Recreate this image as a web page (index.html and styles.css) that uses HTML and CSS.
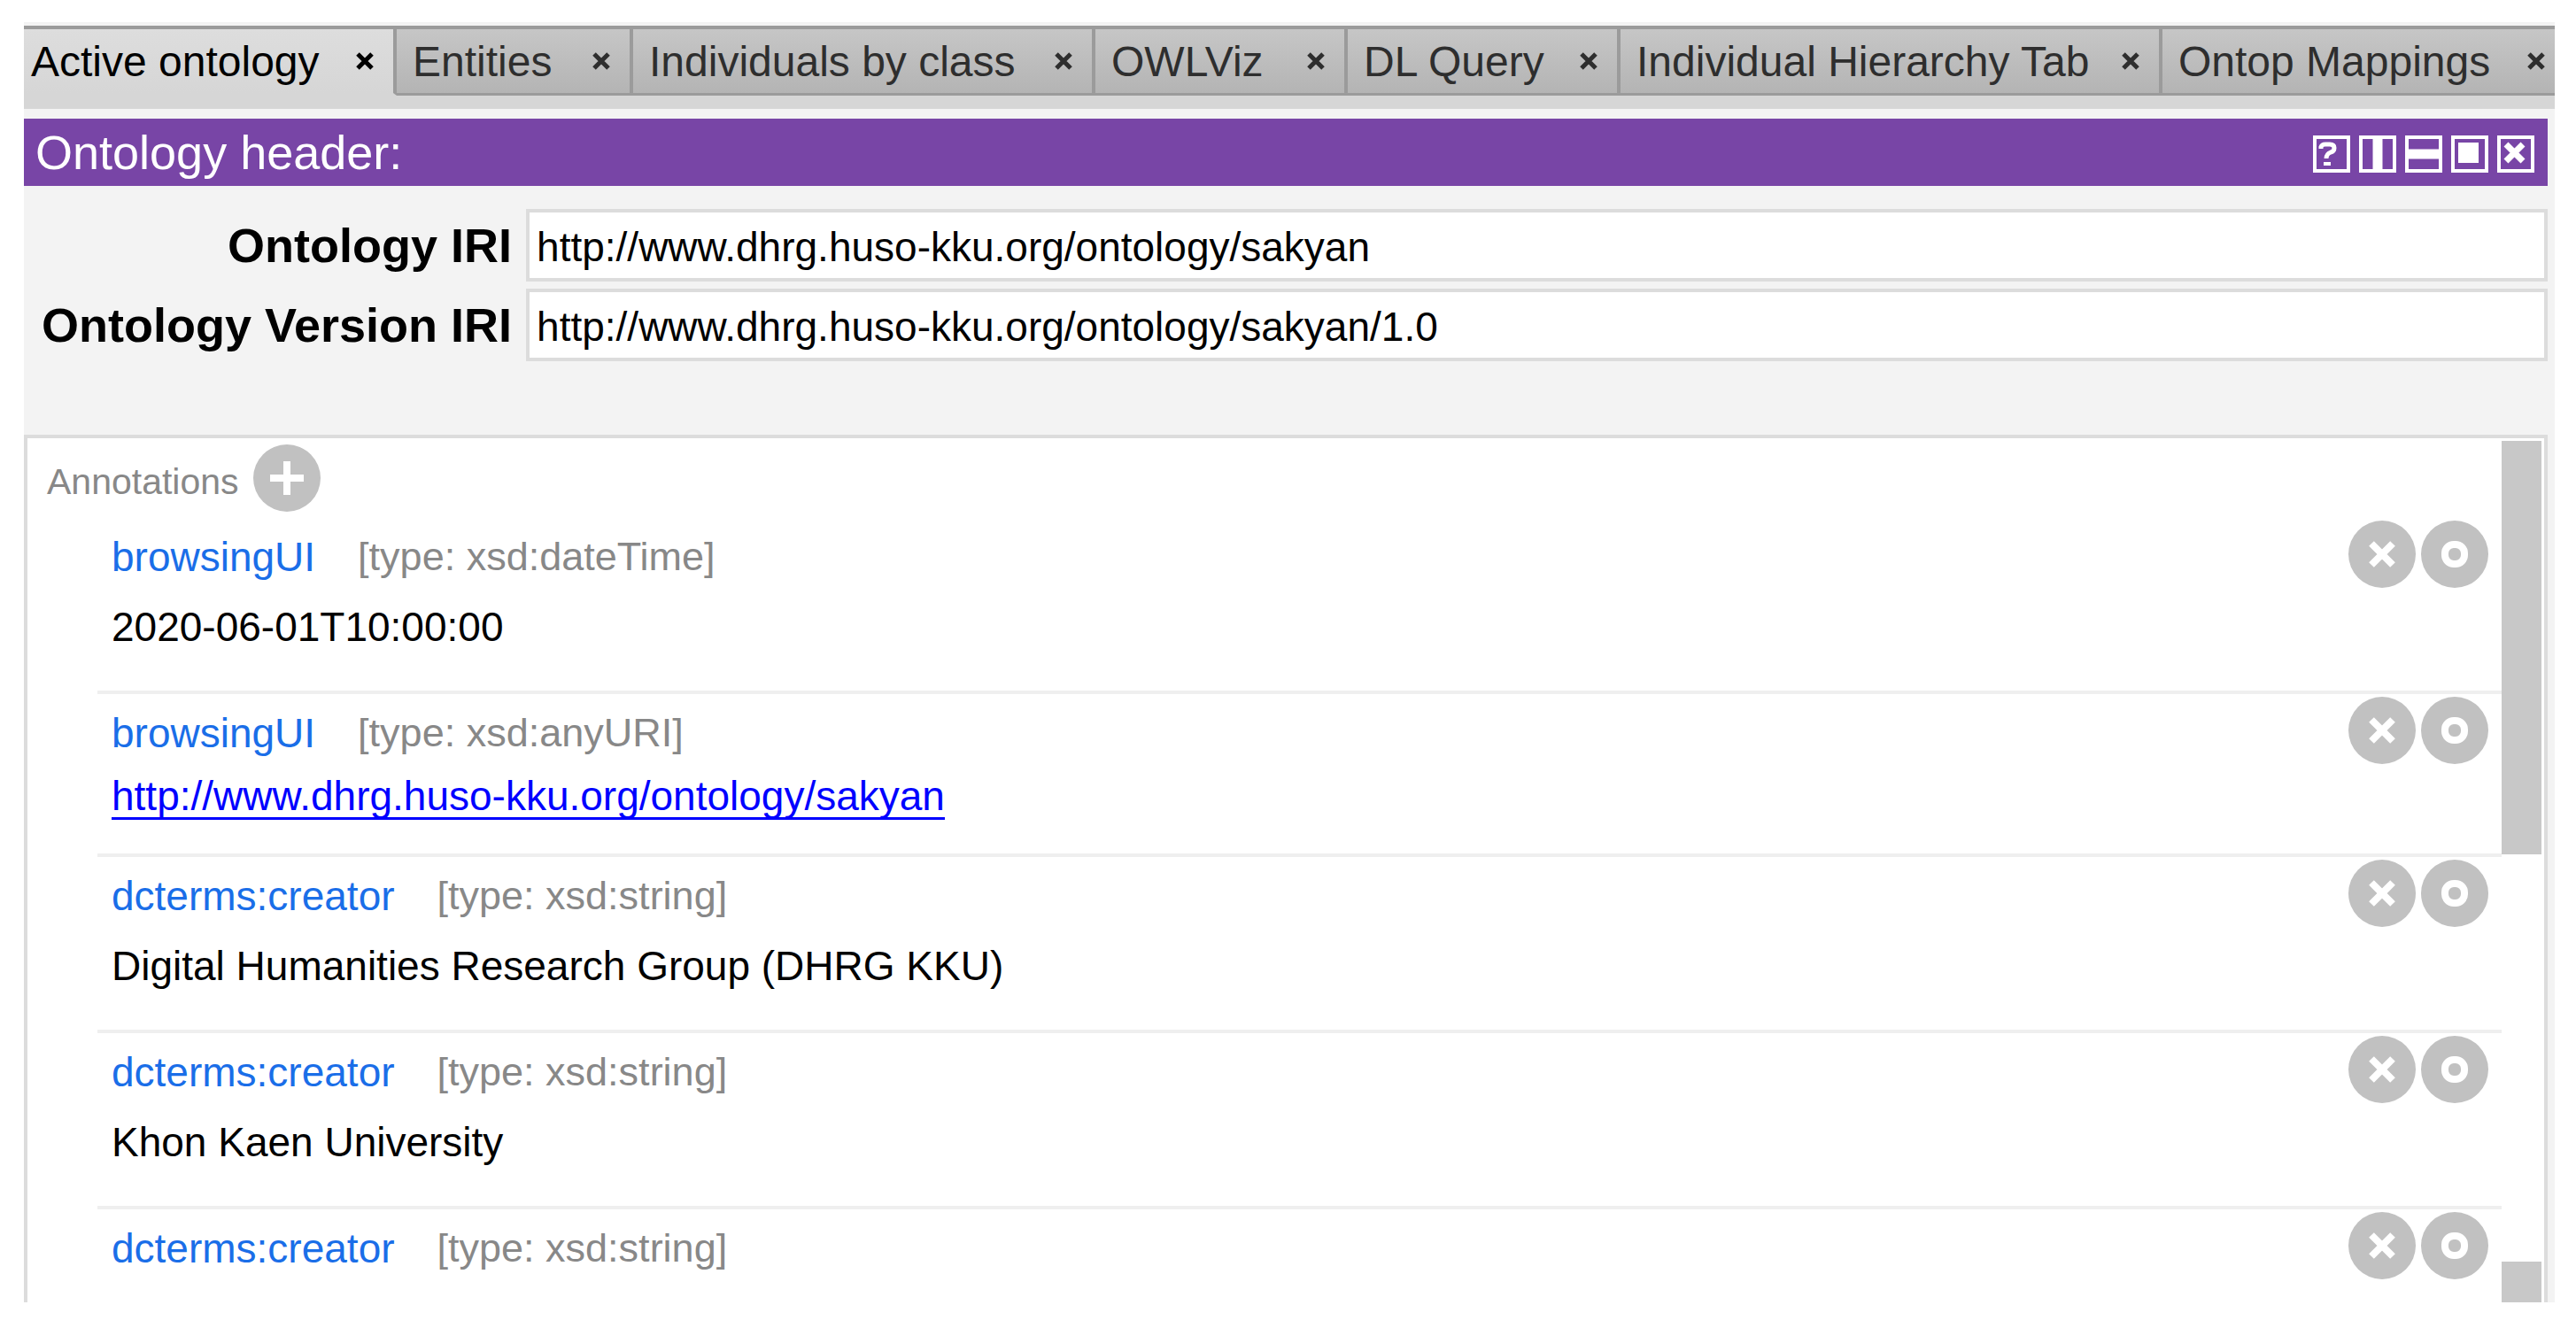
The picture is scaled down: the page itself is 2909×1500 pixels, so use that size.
FILE: index.html
```html
<!DOCTYPE html>
<html lang="en">
  <head>
    <meta charset="UTF-8" />
    <title>Active ontology</title>
    <link rel="stylesheet" href="styles.css">
  </head>
  <body>
    <!-- Shared icons -->
    <svg class="icon-defs" aria-hidden="true">
      <symbol id="icon-tab-close" viewBox="0 0 20 20">
        <path d="M2 2L18 18M18 2L2 18" stroke="currentColor" stroke-width="5" />
      </symbol>
      <symbol id="icon-delete" viewBox="0 0 76 76">
        <circle cx="38" cy="38" r="38" fill="#c1c1c1" />
        <path d="M26 26L50 50M50 26L26 50" stroke="#fff" stroke-width="8" />
      </symbol>
      <symbol id="icon-edit" viewBox="0 0 76 76">
        <circle cx="38" cy="38" r="38" fill="#c1c1c1" />
        <rect x="27" y="27" width="22" height="22" rx="10" fill="none" stroke="#fff" stroke-width="8" />
      </symbol>
    </svg>

    <div class="window">
      <nav class="tabs">
        <div class="tab active">
          <button class="tab-name">Active ontology</button>
          <button class="tab-close" aria-label="Close"><svg><use href="#icon-tab-close" /></svg></button>
        </div>
        <div class="tab">
          <button class="tab-name">Entities</button>
          <button class="tab-close" aria-label="Close"><svg><use href="#icon-tab-close" /></svg></button>
        </div>
        <div class="tab">
          <button class="tab-name">Individuals by class</button>
          <button class="tab-close" aria-label="Close"><svg><use href="#icon-tab-close" /></svg></button>
        </div>
        <div class="tab">
          <button class="tab-name">OWLViz</button>
          <button class="tab-close" aria-label="Close"><svg><use href="#icon-tab-close" /></svg></button>
        </div>
        <div class="tab">
          <button class="tab-name">DL Query</button>
          <button class="tab-close" aria-label="Close"><svg><use href="#icon-tab-close" /></svg></button>
        </div>
        <div class="tab">
          <button class="tab-name">Individual Hierarchy Tab</button>
          <button class="tab-close" aria-label="Close"><svg><use href="#icon-tab-close" /></svg></button>
        </div>
        <div class="tab">
          <button class="tab-name">Ontop Mappings</button>
          <button class="tab-close" aria-label="Close"><svg><use href="#icon-tab-close" /></svg></button>
        </div>
      </nav>

      <main class="view">
        <header class="view-header">
          <h1>Ontology header:</h1>
          <div class="view-actions">
            <button aria-label="Help">
              <svg viewBox="0 0 42 42" fill="none" stroke="#fff">
                <rect x="2" y="2" width="38" height="38" stroke-width="4" />
                <path d="M9 15V13Q10 10 14 10H19Q24 10 24 14Q24 18 20 19Q15 21 15 26" stroke-width="5" />
                <path d="M12 32H20" stroke-width="4" />
              </svg>
            </button>
            <button aria-label="Split vertically">
              <svg viewBox="0 0 42 42" fill="none" stroke="#fff">
                <rect x="2" y="2" width="38" height="38" stroke-width="4" />
                <path d="M21 2V40" stroke-width="11" />
              </svg>
            </button>
            <button aria-label="Split horizontally">
              <svg viewBox="0 0 42 42" fill="none" stroke="#fff">
                <rect x="2" y="2" width="38" height="38" stroke-width="4" />
                <path d="M2 21H40" stroke-width="11" />
              </svg>
            </button>
            <button aria-label="Float">
              <svg viewBox="0 0 42 42" fill="none" stroke="#fff">
                <rect x="2" y="2" width="38" height="38" stroke-width="4" />
                <rect x="8" y="8" width="23" height="23" fill="#fff" stroke="none" />
              </svg>
            </button>
            <button aria-label="Close view">
              <svg viewBox="0 0 42 42" fill="none" stroke="#fff">
                <rect x="2" y="2" width="38" height="38" stroke-width="4" />
                <path d="M10 10L29 29M29 10L10 29" stroke-width="7" />
              </svg>
            </button>
          </div>
        </header>

        <form class="iri-form">
          <label for="ontology-iri">Ontology IRI</label>
          <input type="text" id="ontology-iri" value="http://www.dhrg.huso-kku.org/ontology/sakyan" />
          <label for="version-iri">Ontology Version IRI</label>
          <input type="text" id="version-iri" value="http://www.dhrg.huso-kku.org/ontology/sakyan/1.0" />
        </form>

        <section class="annotations">
          <div class="annotations-list">
            <div class="annotations-title">
              <h2>Annotations</h2>
              <button class="round-button" aria-label="Add annotation">
                <svg viewBox="0 0 76 76">
                  <circle cx="38" cy="38" r="38" fill="#c1c1c1" />
                  <path d="M38 19V57M19 38H57" stroke="#fff" stroke-width="8" />
                </svg>
              </button>
            </div>

            <article class="annotation">
              <div class="annotation-head">
                <span class="property">browsingUI</span>
                <span class="type">[type: xsd:dateTime]</span>
                <button class="round-button" aria-label="Delete"><svg><use href="#icon-delete" /></svg></button>
                <button class="round-button" aria-label="Edit"><svg><use href="#icon-edit" /></svg></button>
              </div>
              <p class="value">2020-06-01T10:00:00</p>
            </article>

            <article class="annotation">
              <div class="annotation-head">
                <span class="property">browsingUI</span>
                <span class="type">[type: xsd:anyURI]</span>
                <button class="round-button" aria-label="Delete"><svg><use href="#icon-delete" /></svg></button>
                <button class="round-button" aria-label="Edit"><svg><use href="#icon-edit" /></svg></button>
              </div>
              <p class="value link"><a href="#">http://www.dhrg.huso-kku.org/ontology/sakyan</a></p>
            </article>

            <article class="annotation">
              <div class="annotation-head">
                <span class="property">dcterms:creator</span>
                <span class="type">[type: xsd:string]</span>
                <button class="round-button" aria-label="Delete"><svg><use href="#icon-delete" /></svg></button>
                <button class="round-button" aria-label="Edit"><svg><use href="#icon-edit" /></svg></button>
              </div>
              <p class="value">Digital Humanities Research Group (DHRG KKU)</p>
            </article>

            <article class="annotation">
              <div class="annotation-head">
                <span class="property">dcterms:creator</span>
                <span class="type">[type: xsd:string]</span>
                <button class="round-button" aria-label="Delete"><svg><use href="#icon-delete" /></svg></button>
                <button class="round-button" aria-label="Edit"><svg><use href="#icon-edit" /></svg></button>
              </div>
              <p class="value">Khon Kaen University</p>
            </article>

            <article class="annotation">
              <div class="annotation-head">
                <span class="property">dcterms:creator</span>
                <span class="type">[type: xsd:string]</span>
                <button class="round-button" aria-label="Delete"><svg><use href="#icon-delete" /></svg></button>
                <button class="round-button" aria-label="Edit"><svg><use href="#icon-edit" /></svg></button>
              </div>
            </article>
          </div>

          <div class="scrollbar">
            <div class="scroll-thumb"></div>
            <div class="scroll-end"></div>
          </div>
        </section>
      </main>
    </div>
  </body>
</html>
```
FILE: styles.css
```css
/* General Styles */
* {
  box-sizing: border-box;
}

body {
  margin: 0;
  padding: 25px 24px 29px 27px;
  height: 100vh;
  background: #fff;
  color: #000;
  font-family: "Liberation Sans", Arial, sans-serif;
}

h1,
h2,
p {
  margin: 0;
  font-weight: normal;
}

button {
  padding: 0;
  border: none;
  background: none;
  color: inherit;
  font: inherit;
  cursor: pointer;
}

svg {
  display: block;
  width: 100%;
  height: 100%;
}

.icon-defs {
  position: absolute;
  width: 0;
  height: 0;
}

.window {
  display: flex;
  flex-direction: column;
  height: 100%;
  padding-top: 4px;
  background: #f3f3f3;
}

/* Tabs */
.tabs {
  display: grid;
  grid-template-columns: 421fr 267fr 522fr 285fr 308fr 612fr 443fr;
  padding-bottom: 15px;
  border-top: 4px solid #9b9b9b;
  background: #d6d6d6;
}

.tab {
  display: flex;
  align-items: center;
  justify-content: space-between;
  min-width: 0;
  height: 75px;
  padding: 0 22px 0 18px;
  border-right: 4px solid #9b9b9b;
  border-bottom: 3px solid #9b9b9b;
  background: linear-gradient(#c6c6c6, #b4b4b4);
  color: #2e2e2e;
  font-size: 48px;
  white-space: nowrap;
}

.tab.active {
  padding-left: 8px;
  border-bottom-color: #d6d6d6;
  background: linear-gradient(#dddddd, #d6d6d6);
  color: #000;
}

.tab:last-child {
  padding-right: 11px;
  border-right: none;
}

.tab-close {
  flex: none;
  width: 20px;
  height: 20px;
}

/* View */
.view {
  display: flex;
  flex-direction: column;
  flex: 1;
  min-height: 0;
  padding: 11px 8px 0 0;
}

.view-header {
  display: flex;
  align-items: center;
  justify-content: space-between;
  height: 76px;
  padding: 0 15px 0 13px;
  background: #7845a6;
  color: #fff;
}

.view-header h1 {
  font-size: 54px;
}

.view-actions {
  display: flex;
  gap: 10px;
  padding-top: 4px;
}

.view-actions button {
  width: 42px;
  height: 42px;
}

.iri-form {
  display: grid;
  grid-template-columns: auto 1fr;
  align-items: center;
  gap: 8px 16px;
  padding: 26px 0 83px 20px;
}

.iri-form label {
  font-size: 54px;
  font-weight: bold;
  text-align: right;
}

.iri-form input {
  width: 100%;
  height: 82px;
  padding: 4px 8px 0;
  border: 4px solid #dcdcdc;
  background: #fff;
  color: #000;
  font-family: inherit;
  font-size: 46px;
}

/* Annotations */
.annotations {
  display: flex;
  flex: 1;
  min-height: 0;
  overflow: hidden;
  border: 4px solid #dcdcdc;
  border-bottom: none;
  background: #fff;
}

.annotations-list {
  flex: 1;
}

.annotations-title {
  display: flex;
  align-items: center;
  gap: 16px;
  padding: 7px 0 7px 22px;
}

.annotations-title h2 {
  padding-top: 8px;
  color: #888;
  font-size: 41px;
}

.round-button {
  flex: none;
  width: 76px;
  height: 76px;
}

.annotation {
  margin-left: 79px;
  padding: 3px 15px 28px 16px;
  border-bottom: 4px solid #efefef;
}

.annotation-head {
  display: flex;
  align-items: center;
  gap: 6px;
  font-size: 46px;
}

.property,
.type {
  padding-top: 6px;
}

.property {
  color: #1a6ee8;
}

.type {
  flex: 1;
  margin-left: 42px;
  color: #888;
  font-size: 45px;
}

.value {
  font-size: 46px;
  line-height: 88px;
}

.value.link {
  line-height: 73px;
}

.value a {
  color: #00f;
  text-decoration-thickness: 3px;
  text-decoration-skip-ink: none;
  text-underline-offset: 8px;
}

/* Scrollbar */
.scrollbar {
  display: flex;
  flex-direction: column;
  justify-content: space-between;
  width: 48px;
  padding: 3px 3px 0 0;
}

.scroll-thumb {
  height: 48%;
  background: #c8c8c8;
}

.scroll-end {
  height: 46px;
  background: #c8c8c8;
}
```
